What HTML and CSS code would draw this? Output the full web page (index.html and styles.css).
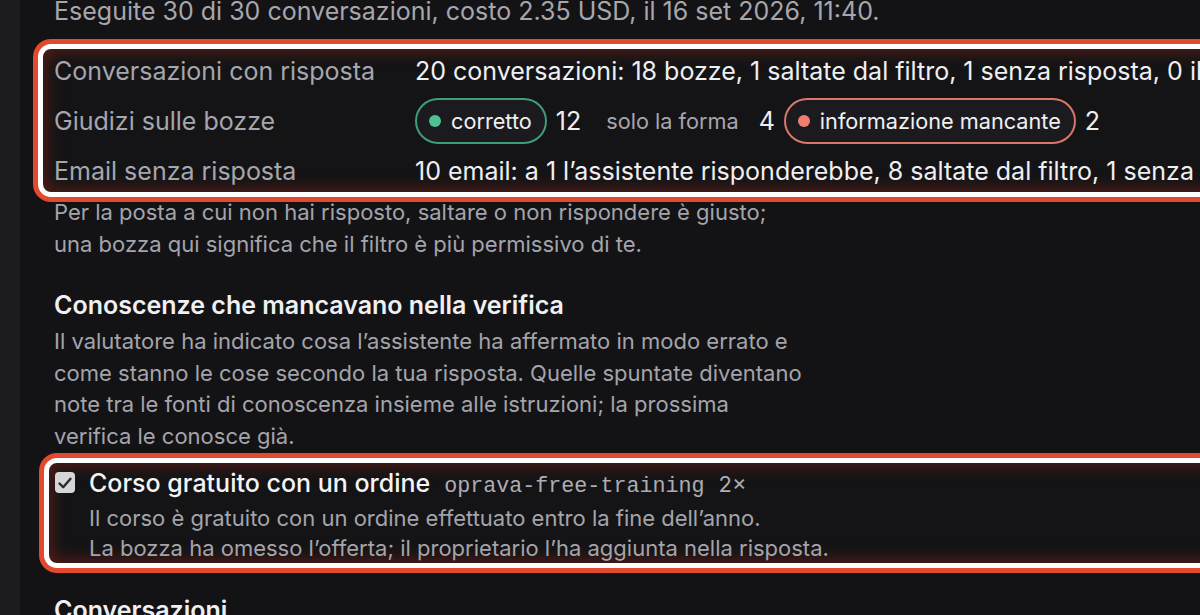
FILE: index.html
```html
<!DOCTYPE html>
<html lang="it">
<head>
<meta charset="utf-8">
<title>Verifica</title>
<link rel="stylesheet" href="styles.css">
</head>
<body>
<div class="app">
  <aside class="rail"></aside>
  <main class="content">
    <p class="run-summary">Eseguite 30 di 30 conversazioni, costo 2.35 USD, il 16 set 2026, 11:40.</p>

    <section class="highlight stats">
      <div class="stat-label">Conversazioni con risposta</div>
      <div class="stat-value">20 conversazioni: 18 bozze, 1 saltate dal filtro, 1 senza risposta, 0 il proprietario non ha risposto</div>

      <div class="stat-label">Giudizi sulle bozze</div>
      <div class="stat-value verdicts">
        <span class="pill pill-ok"><span class="dot"></span>corretto</span>
        <span class="count">12</span>
        <span class="pill pill-plain">solo la forma</span>
        <span class="count">4</span>
        <span class="pill pill-bad"><span class="dot"></span>informazione mancante</span>
        <span class="count">2</span>
      </div>

      <div class="stat-label">Email senza risposta</div>
      <div class="stat-value">10 email: a 1 l’assistente risponderebbe, 8 saltate dal filtro, 1 senza risposta</div>
    </section>

    <p class="note">Per la posta a cui non hai risposto, saltare o non rispondere è giusto;<br>una bozza qui significa che il filtro è più permissivo di te.</p>

    <h2 class="section-title">Conoscenze che mancavano nella verifica</h2>
    <p class="note">Il valutatore ha indicato cosa l’assistente ha affermato in modo errato e<br>come stanno le cose secondo la tua risposta. Quelle spuntate diventano<br>note tra le fonti di conoscenza insieme alle istruzioni; la prossima<br>verifica le conosce già.</p>

    <div class="highlight fact">
      <span class="check" aria-hidden="true">
        <svg viewBox="0 0 20 20" width="20" height="20"><path d="M4.5 10.5 L8.2 14.2 L15.5 5.8" fill="none" stroke="#2b2b2e" stroke-width="2.4" stroke-linecap="round" stroke-linejoin="round"/></svg>
      </span>
      <div class="fact-body">
        <div class="fact-head">
          <span class="fact-title">Corso gratuito con un ordine</span>
          <code class="fact-key">oprava-free-training</code>
          <span class="fact-count">2×</span>
        </div>
        <p class="fact-text">Il corso è gratuito con un ordine effettuato entro la fine dell’anno.</p>
        <p class="fact-text">La bozza ha omesso l’offerta; il proprietario l’ha aggiunta nella risposta.</p>
      </div>
    </div>

    <h2 class="section-title section-next">Conversazioni</h2>
  </main>
</div>
</body>
</html>
```
FILE: styles.css
```css
* { box-sizing: border-box; }

html, body {
  margin: 0;
  height: 100%;
  overflow: hidden;
  background: #131316;
}

body {
  font-family: Inter, "Noto Sans", "DejaVu Sans", sans-serif;
  color: #ececef;
}

.app {
  display: flex;
  height: 100%;
}

.rail {
  flex: 0 0 20px;
  background: #1c1c20;
}

.content {
  flex: 0 0 1320px;
  padding-left: 34px;
}

.run-summary {
  margin: -5px 0 0;
  font-size: 25px;
  line-height: 32px;
  color: #a6a6ad;
}

.highlight {
  border: 5px solid #ffffff;
  border-radius: 13px;
  box-shadow: 0 0 0 5px #e14a2f, inset 0 0 16px 3px rgba(125, 36, 24, 0.62);
  background: #141416;
}

.stats {
  margin: 17px 0 0 -16px;
  padding: 6px 0 5px 11px;
  display: grid;
  grid-template-columns: 361px max-content;
  row-gap: 11px;
  align-items: center;
  white-space: nowrap;
  font-size: 25px;
  line-height: 32px;
}

.stat-label {
  color: #a6a6ad;
}

.stat-value {
  color: #efeff2;
}

.verdicts {
  display: flex;
  align-items: center;
  gap: 9px;
}

.pill {
  display: inline-flex;
  align-items: center;
  gap: 10px;
  height: 46px;
  padding: 0 13px 0 12px;
  border: 2px solid transparent;
  border-radius: 23px;
  background: #1b1b1f;
  font-size: 21.7px;
  color: #f0f0f2;
}

.pill .dot {
  width: 12px;
  height: 12px;
  border-radius: 50%;
}

.pill-ok { border-color: #3e9e78; }
.pill-ok .dot { background: #4fc08f; }

.pill-bad { border-color: #d9776a; }
.pill-bad .dot { background: #f07d70; }

.pill-plain {
  background: transparent;
  color: #a6a6ad;
  padding: 0 9px 0 14px;
}

.count {
  font-size: 25px;
  color: #efeff2;
}

.note {
  margin: 0;
  font-size: 22px;
  line-height: 31.5px;
  color: #a4a4ab;
}

.section-title {
  margin: 29px 0 5px;
  font-size: 25px;
  line-height: 32px;
  font-weight: 600;
  color: #f0f0f2;
}

.fact {
  margin: 6px 0 0 -10px;
  padding: 4px 0 0 6px;
  display: flex;
  align-items: flex-start;
  gap: 14px;
}

.check {
  flex: 0 0 20px;
  width: 20px;
  height: 21px;
  margin-top: 5px;
  border-radius: 4px;
  background: #d6d6d8;
  display: flex;
  align-items: center;
  justify-content: center;
}

.fact-body {
  flex: 1;
}

.fact-head {
  display: flex;
  align-items: baseline;
  gap: 14px;
  line-height: 32px;
}

.fact-title {
  font-size: 25px;
  font-weight: 500;
  color: #f4f4f6;
}

.fact-key {
  font-family: "Liberation Mono", "DejaVu Sans Mono", monospace;
  font-size: 21.7px;
  color: #adadb3;
}

.fact-count {
  font-size: 22px;
  color: #adadb3;
}

.fact-text {
  margin: 0;
  font-size: 22px;
  line-height: 30px;
  color: #a4a4ab;
}

.section-next {
  margin-top: 26px;
}
```
